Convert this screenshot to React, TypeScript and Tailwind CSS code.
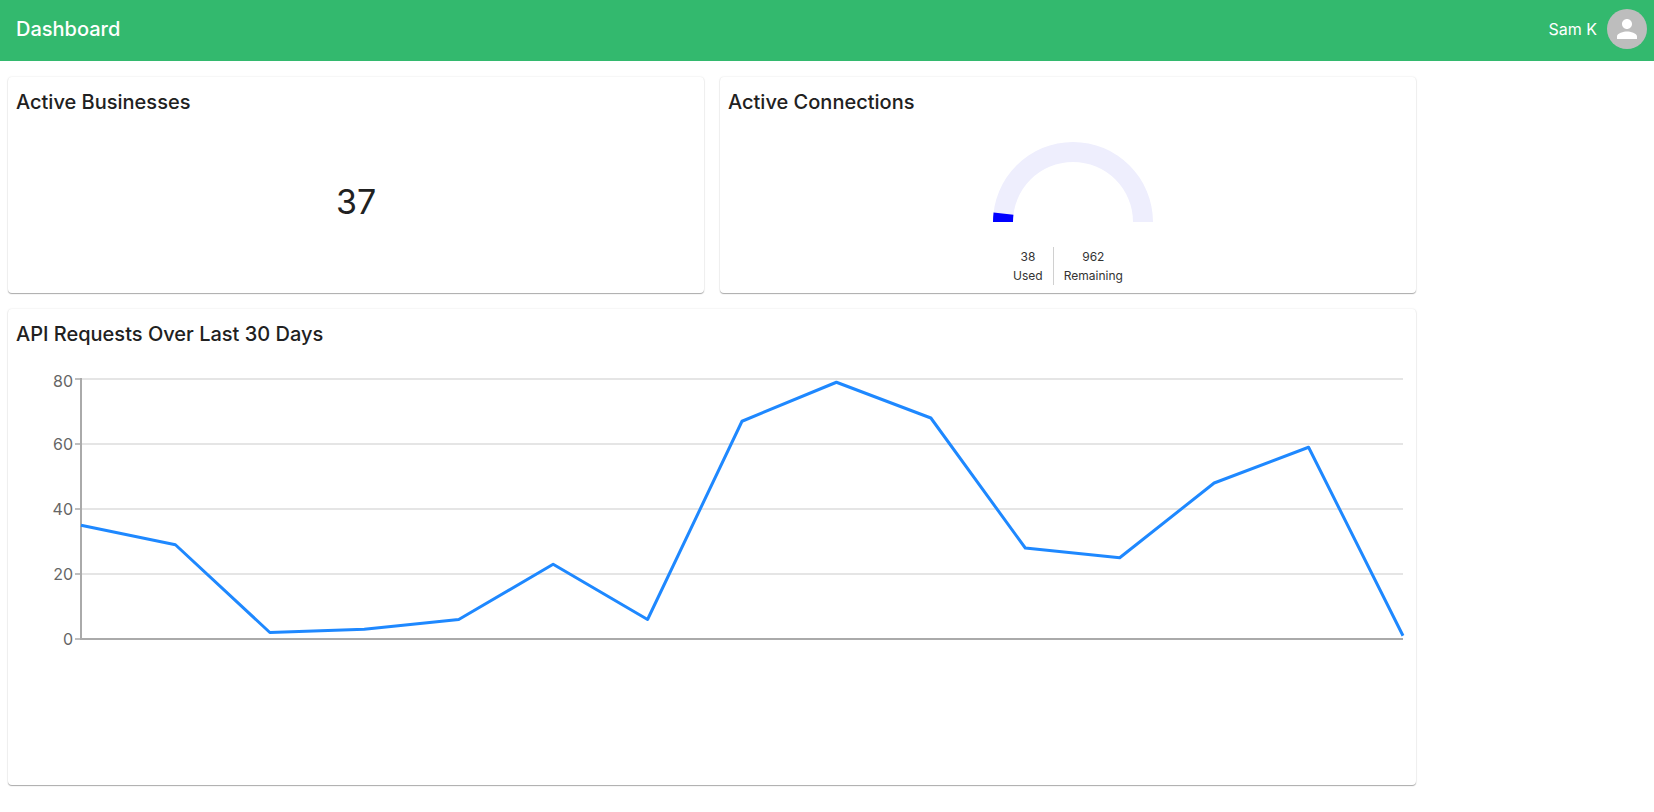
import React from 'react';

const requests = [35, 29, 2, 3, 6, 23, 6, 67, 79, 68, 28, 25, 48, 59, 1];
const ticks = [80, 60, 40, 20, 0];

// chart box coordinates, relative to the svg
const axisX = 65;
const chartRight = 1387;
const zeroY = 270;
const yFor = (v: number) => zeroY - v * 3.25;
const xFor = (i: number) => axisX + (i * (chartRight - axisX)) / (requests.length - 1);

function Card({ title, className, children }: { title: string; className?: string; children: React.ReactNode }) {
    return (
        <div className={`bg-white rounded shadow-[0_1px_1px_0_#aaaaaa,0_0_2px_0_rgba(0,0,0,0.12)] p-2 ${className ?? ''}`}>
            <h2 className="text-[20px] leading-8 font-medium text-[#212121] mt-[1px]">{title}</h2>
            {children}
        </div>
    );
}

function Gauge() {
    const used = 38 / 1000;
    const angle = Math.PI * (1 - used);
    const cx = 80;
    const cy = 80;
    const x1 = cx + 80 * Math.cos(angle);
    const y1 = cy - 80 * Math.sin(angle);
    const x2 = cx + 60 * Math.cos(angle);
    const y2 = cy - 60 * Math.sin(angle);
    return (
        <svg width="160" height="80" viewBox="0 0 160 80" className="block ml-[10px]">
            <path d="M0 80A80 80 0 0 1 160 80H140A60 60 0 0 0 20 80Z" fill="#eeeefd" />
            <path d={`M0 80A80 80 0 0 1 ${x1} ${y1}L${x2} ${y2}A60 60 0 0 0 20 80Z`} fill="#0000ff" />
        </svg>
    );
}

function RequestsChart() {
    const points = requests.map((v, i) => `${xFor(i)},${yFor(v)}`).join(' ');
    return (
        <svg width="1392" height="280" viewBox="0 0 1392 280" className="block">
            {ticks.map(t => (
                <g key={t}>
                    {t > 0 && <line x1={axisX} x2={chartRight} y1={yFor(t)} y2={yFor(t)} stroke="#dcdcdc" strokeWidth="1.5" />}
                    <line x1={axisX - 6} x2={axisX} y1={yFor(t)} y2={yFor(t)} stroke="#aaaaaa" strokeWidth="1.5" />
                    {/* the top label sits a little lower than its tick */}
                    <text x={axisX - 8} y={yFor(t) + (t === 80 ? 8 : 5.5)} textAnchor="end" fontSize="16" fill="#666666">{t}</text>
                </g>
            ))}
            <line x1={axisX} x2={axisX} y1={yFor(80) - 1} y2={zeroY + 1} stroke="#aaaaaa" strokeWidth="2" />
            <line x1={axisX} x2={chartRight} y1={zeroY} y2={zeroY} stroke="#aaaaaa" strokeWidth="2" />
            <polyline points={points} fill="none" stroke="#1e88ff" strokeWidth="3" strokeLinejoin="round" />
        </svg>
    );
}

export default function App() {
    return (
        <div className="min-h-[812px] bg-white font-['Inter',sans-serif]">
            <header className="h-[61px] bg-[#33b96e] flex items-center justify-between pl-4 pr-[7px] pb-[3px] text-white">
                <span className="text-[20px] font-medium">Dashboard</span>
                <div className="flex items-center gap-[10px]">
                    <span className="text-[16px]">Sam K</span>
                    <div className="w-10 h-10 rounded-full bg-[#bdbdbd] flex items-center justify-center">
                        <svg width="30" height="30" viewBox="0 0 24 24" fill="#ffffff">
                            <path d="M12 12c2.21 0 4-1.79 4-4s-1.79-4-4-4-4 1.79-4 4 1.79 4 4 4zm0 2c-2.67 0-8 1.34-8 4v2h16v-2c0-2.66-5.33-4-8-4z" />
                        </svg>
                    </div>
                </div>
            </header>
            <main className="w-[1408px] ml-2 mt-4 grid grid-cols-2 gap-4">
                <Card title="Active Businesses" className="h-[216px]">
                    <div className="text-center text-[34px] leading-none text-[#212121] mt-[67px]">37</div>
                </Card>
                <Card title="Active Connections" className="h-[216px]">
                    <div className="flex flex-col items-center mt-[24px]">
                        <Gauge />
                        <div className="flex text-[12px] leading-[19px] text-[#333333] mt-[25px]">
                            <div className="text-center pr-[10px] border-r border-[#d0d0d0]">
                                <div>38</div>
                                <div>Used</div>
                            </div>
                            <div className="text-center pl-[10px]">
                                <div>962</div>
                                <div>Remaining</div>
                            </div>
                        </div>
                    </div>
                </Card>
                <Card title="API Requests Over Last 30 Days" className="col-span-2 h-[476px]">
                    <div className="mt-[19px]">
                        <RequestsChart />
                    </div>
                </Card>
            </main>
        </div>
    );
}
